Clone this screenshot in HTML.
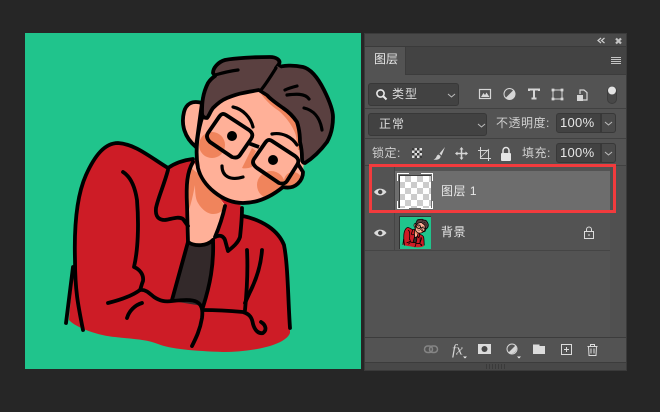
<!DOCTYPE html>
<html><head><meta charset="utf-8">
<style>
html,body{margin:0;padding:0;width:660px;height:412px;overflow:hidden;background:#262626}
body{position:relative;font-family:"Liberation Sans","Noto Sans CJK SC",sans-serif}
.a{position:absolute;box-sizing:border-box}
.t{position:absolute;color:#dadada;font-size:12px;line-height:16px;white-space:nowrap}
.f{position:absolute;box-sizing:border-box;background:#424242;border:1px solid #383838;border-radius:3px}
.s{stroke-width:var(--sw,3.8)}
</style></head><body>
<div class="a" style="left:25px;top:33px;width:336px;height:336px;background:#20c48c"></div>
<div class="a" style="left:364px;top:33px;width:263px;height:338px;background:#535353;border:1px solid #3a3a3a"></div>
<div class="a" style="left:365px;top:47px;width:261px;height:28px;background:#434343"></div>
<div class="a" style="left:365px;top:34px;width:261px;height:13px;background:#494949;border-bottom:1px solid #3a3a3a"></div>
<div class="a" style="left:365px;top:47px;width:41px;height:28px;background:#535353;border-right:1px solid #3c3c3c"></div>
<div class="a" style="left:406px;top:74px;width:220px;height:1px;background:#3c3c3c"></div>
<div class="a" style="left:365px;top:108px;width:261px;height:1px;background:#414141"></div>
<div class="a" style="left:365px;top:138px;width:261px;height:1px;background:#414141"></div>
<div class="a" style="left:365px;top:165px;width:261px;height:1px;background:#414141"></div>
<div class="a" style="left:395px;top:171px;width:215px;height:39px;background:#6d6d6d"></div>
<div class="a" style="left:395px;top:211px;width:215px;height:39px;background:#535353"></div>
<div class="a" style="left:365px;top:250px;width:245px;height:1px;background:#454545"></div>
<div class="a" style="left:394px;top:166px;width:1px;height:85px;background:#454545"></div>
<div class="a" style="left:610px;top:166px;width:16px;height:171px;background:#505050"></div>
<div class="a" style="left:365px;top:337px;width:261px;height:1px;background:#3c3c3c"></div>
<div class="a" style="left:365px;top:362px;width:261px;height:8px;background:#484848;border-top:1px solid #3c3c3c"></div>
<div class="a" style="left:486px;top:364px;width:19px;height:5px;background:repeating-linear-gradient(90deg,#3a3a3a 0 1px,transparent 1px 3px)"></div>

<div class="f" style="left:368px;top:83px;width:91px;height:23px"></div>
<div class="f" style="left:368px;top:113px;width:119px;height:23px"></div>
<div class="f" style="left:556px;top:113px;width:45px;height:20px;border-radius:3px 0 0 3px"></div>
<div class="f" style="left:601px;top:113px;width:15px;height:20px;background:#4a4a4a;border-radius:0 3px 3px 0"></div>
<div class="f" style="left:556px;top:143px;width:45px;height:20px;border-radius:3px 0 0 3px"></div>
<div class="f" style="left:601px;top:143px;width:15px;height:20px;background:#4a4a4a;border-radius:0 3px 3px 0"></div>

<div class="t" style="left:374px;top:51px;font-size:12px;color:#e6e6e6">图层</div>
<div class="t" style="left:392px;top:86px;letter-spacing:1px">类型</div>
<div class="t" style="left:379px;top:116px;letter-spacing:1px">正常</div>
<div class="t" style="left:496px;top:115px;letter-spacing:.5px;color:#cfcfcf">不透明度:</div>
<div class="t" style="left:560px;top:115px;font-size:13px;letter-spacing:.3px;color:#e6e6e6">100%</div>
<div class="t" style="left:372px;top:145px;letter-spacing:.5px;color:#cfcfcf">锁定:</div>
<div class="t" style="left:522px;top:145px;letter-spacing:.5px;color:#cfcfcf">填充:</div>
<div class="t" style="left:560px;top:145px;font-size:13px;letter-spacing:.3px;color:#e6e6e6">100%</div>
<div class="t" style="left:441px;top:183px;letter-spacing:.5px;color:#e8e8e8">图层 1</div>
<div class="t" style="left:441px;top:224px;letter-spacing:.5px;color:#e8e8e8">背景</div>

<div class="a" style="left:399px;top:176px;width:32px;height:32px;background-color:#fff;background-image:conic-gradient(#ccc 25%,#fff 0 50%,#ccc 0 75%,#fff 0);background-size:12px 12px"></div>
<div class="a" style="left:399px;top:217px;width:32px;height:32px;background:#20c48c;overflow:hidden"></div>

<svg class="a" style="left:0;top:0" width="660" height="412" viewBox="0 0 660 412">
<defs><clipPath id="fc"><path d="M203 115C197 132 195 152 198 168C202 185 222 203 243 203C258 203 272 196 283 187C296 190 303 180 303 172L304 160C306 140 304 115 285 98C272 88 260 85 243 88C225 92 210 100 203 115Z"/></clipPath></defs>
<g id="art">
<!-- jacket -->
<path d="M118 143C105 143 92 158 84 182C76 210 74 240 74 270C72 290 70 305 69 320C76 328 100 336 115 337C130 339 145 339 158 344C170 349 195 351 223 352C250 352 285 346 290 333C290 300 288 265 284 245C278 230 262 222 243 216L242 207L193 158C185 160 175 163 168 168C150 157 135 144 118 143Z" fill="#cd1c26"/>
<!-- neck -->
<path d="M193 160C187 172 186 185 187 205L188 242C195 247 207 246 213 240L225 205L198 170Z" fill="#ffb098"/>
<path d="M190 167C187 185 187 200 188 212C191 205 193 195 195 185C195 195 196 200 198 203C202 210 208 214 213 214C218 214 222 212 225 207L215 190L200 175Z" fill="#f0845c"/>
<!-- shirt -->
<path d="M188 242C195 247 207 246 213 240C214 265 210 285 203 306L172 301Z" fill="#33292a"/>
<g class="s" fill="none" stroke="#000" stroke-linecap="round" stroke-linejoin="round">
<path d="M83 330C78 305 75 290 75 260C74 225 77 195 86 175C95 155 105 143 118 143C135 144 150 157 168 168"/>
<path d="M73 267L66 323"/>
<path d="M168 170C164 185 158 198 156 208C155 217 159 220 165 220C172 219 178 216 183 219L188 226"/>
<path d="M168 168C175 163 185 160 193 159"/>
<path d="M193 162C187 172 186 185 187 205L188 242C195 247 207 246 213 240"/>
<path d="M188 242L172 300"/>
<path d="M225 206C222 220 218 230 215 237C219 235 223 235 225 240L228 251C233 247 238 243 240 237C241 228 242 218 242 208"/>
<path d="M213 240C214 265 210 285 203 307"/>
<path d="M243 216C262 220 278 230 284 245C288 265 288 300 290 328"/>
<path d="M123 172C131 177 135 187 137 200C139 225 138 250 134 267C139 269 144 274 143 281C141 286 141 288 140 290C132 296 120 300 108 303"/>
<path d="M140 290C146 289 150 294 154 297C160 301 165 302 172 301C182 300 192 299 197 302C202 305 203 310 202 318C200 330 196 338 192 346"/>
<path d="M142 303C135 305 129 311 127 318"/>
<path d="M203 310C215 310 232 311 243 312C250 314 252 318 253 324C255 331 259 334 263 333C267 330 266 325 261 322"/>
<path d="M247 250C248 270 247 290 245 310"/>
<path d="M262 250C261 265 256 280 250 292L245 303"/>
</g>
<!-- ear -->
<path class="s" d="M202 103C192 100 186 104 184 112C181 124 184 137 196 147Z" fill="#ffb098" stroke="#000" stroke-linejoin="round"/>
<!-- face -->
<path d="M203 115C197 132 195 152 198 168C202 185 222 203 243 203C258 203 272 196 283 187C296 190 303 180 303 172L304 160C306 140 304 115 285 98C272 88 260 85 243 88C225 92 210 100 203 115Z" fill="#ffb098"/>
<g clip-path="url(#fc)">
<circle cx="212" cy="145" r="13" fill="#f0845c"/>
<circle cx="271" cy="185" r="14" fill="#f0845c"/>
<circle cx="293" cy="181" r="9" fill="#f0845c"/>
<path d="M259 90C263 98 270 105 279 111C287 118 294 128 296 136L298 150L306 150L304 115L280 88Z" fill="#f0845c"/>
<path d="M252 148L242 168C245 169 249 168 252 167C252 161 253 156 256 151Z" fill="#f0845c"/>
</g>
<path class="s" d="M203 115C197 132 195 152 198 168C202 185 222 203 243 203C258 203 272 196 283 187C296 190 303 180 303 172L298 164" fill="none" stroke="#000" stroke-linecap="round" stroke-linejoin="round"/>
<!-- hair -->
<path class="s" d="M213 73C213 68 218 62 225 60C235 58 255 57 270 57C276 57 281 60 279 64L276 68C283 65 294 65 303 67C311 69 318 78 324 90C329 100 333 110 333 117C333 126 331 135 327 142C321 150 313 158 305 163C302 163 302 160 302 158C302 150 301 146 300 142C300 135 299 128 297 122C293 116 289 112 283 108C276 103 270 99 267 95L259 90C253 91 248 92 243 93C237 94 232 96 227 98C222 100 217 104 213 108C210 112 209 116 207 118C204 118 202 116 202 113C202 108 202 103 203 98C204 92 206 87 208 83C210 80 212 78 215 76Z" fill="#5a4040" stroke="#000" stroke-linejoin="round"/>
<path d="M259 88C264 82 270 74 277 66L284 70L270 95Z" fill="#5a4040"/>
<g class="s" fill="none" stroke="#000" stroke-linecap="round" stroke-linejoin="round" style="--sw:3.2">
<path d="M215 75C222 73 230 71 238 70"/>
<path d="M285 90C289 88 293 87 297 86"/>
<path d="M287 95C295 94 305 93 309 99"/>
<path d="M304 108C313 110 320 117 322 130"/>
<path d="M233 107C243 109 251 118 253 127"/>
<path d="M272 134C282 132 292 137 297 145"/>
<path d="M222 166C222 176 230 181 243 177"/>
<path d="M261 90C266 84 271 76 276 68"/>
</g>
<!-- glasses -->
<g class="s" fill="none" stroke="#000" stroke-linejoin="round">
<path d="M226 115L249 130C253 133 253 136 251 139L240 155C238 158 235 158 232 157L210 142C207 139 206 136 208 133L219 117C221 114 223 113 226 115Z"/>
<path d="M272 141L295 156C299 159 299 162 297 165L287 181C285 184 282 184 279 183L257 168C253 165 252 162 254 159L265 143C267 140 269 139 272 141Z"/>
<path d="M248 143L259 147"/>
</g>
<circle cx="232" cy="136" r="5" fill="#000"/>
<circle cx="273" cy="160" r="5" fill="#000"/>
</g>

<!-- thumbnail 2 -->
<use href="#art" transform="translate(399 217) scale(.0952) translate(-25 -33)" style="--sw:8"/>
<path d="M399.500 249V216.500H431" fill="none" stroke="#333" stroke-width="1"/>

<!-- thumb brackets -->
<path d="M397.500 181V173.500H409M421 173.500H432.500V181M432.500 201V208.500H421M409 208.500H397.500V201" fill="none" stroke="#fff" stroke-width="1"/>
<path d="M399.500 208V175.500H431" fill="none" stroke="#3a3a3a" stroke-width="1"/>

<!-- red box -->
<rect x="370.500" y="165.500" width="244" height="46" fill="none" stroke="#f23b3d" stroke-width="3"/>

<!-- top icons -->
<path d="M601 38L598 40.500L601 43M604.500 38L601.500 40.500L604.500 43" fill="none" stroke="#cfcfcf" stroke-width="1.200"/>
<path d="M616 38.500L621 43.500M621 38.500L616 43.500" stroke="#c4c4c4" stroke-width="2.200"/>
<path d="M611 57.500H621M611 59.500H621M611 61.500H621M611 63.500H621" stroke="#c4c4c4" stroke-width="1"/>

<!-- search -->
<circle cx="380.500" cy="93.500" r="3.600" fill="none" stroke="#e8e8e8" stroke-width="1.600"/>
<path d="M383 96L386.500 99.500" stroke="#e8e8e8" stroke-width="2"/>
<path d="M448 94L451.500 97L455 94M478 124L481.500 127L485 124M605 122L608.500 125L612 122M605 152L608.500 155L612 152" fill="none" stroke="#bdbdbd" stroke-width="1"/>

<!-- filter icons -->
<rect x="479.500" y="89.500" width="11" height="9" fill="none" stroke="#d6d6d6" stroke-width="1.200"/>
<path d="M481 97L483.500 93L485 95L486.500 92.500L489.500 97Z" fill="#d6d6d6"/>
<circle cx="509.500" cy="94" r="5.500" fill="#555" stroke="#d6d6d6" stroke-width="1"/>
<path d="M513.500 90L505.500 98A5.500 5.500 0 0 0 513.500 90Z" fill="#d6d6d6"/>
<path d="M529 91V89.500H539V91M534 90V98.500M531.500 98.500H536.500" fill="none" stroke="#d6d6d6" stroke-width="2"/>
<rect x="553" y="90" width="9" height="9" fill="none" stroke="#d6d6d6" stroke-width="1"/>
<path d="M552 89h2v2h-2zM561 89h2v2h-2zM552 98h2v2h-2zM561 98h2v2h-2z" fill="#d6d6d6" stroke="#d6d6d6" stroke-width=".8"/>
<path d="M580 94V90H584L587 92.500V100H583" fill="none" stroke="#d6d6d6" stroke-width="1.200"/>
<rect x="577" y="95" width="6" height="6" fill="#d6d6d6"/>
<rect x="607.500" y="86.500" width="9" height="17" rx="4.500" fill="#484848" stroke="#3c3c3c"/>
<circle cx="612" cy="90.500" r="4" fill="#e4e4e4"/>

<!-- lock icons -->
<rect x="412" y="148" width="10" height="10" fill="#ddd"/>
<path d="M412 148h2.500v2.500H412zM417 148h2.500v2.500H417zM414.500 150.500h2.500V153h-2.500zM419.500 150.500H422V153h-2.500zM412 153h2.500v2.500H412zM417 153h2.500v2.500H417zM414.500 155.500h2.500V158h-2.500zM419.500 155.500H422V158h-2.500z" fill="#3a3a3a"/>
<path d="M445 147L439.500 153.500L441.500 155.500Z" fill="#d6d6d6"/>
<path d="M438.500 154.500C436 155 437 158.500 433.500 159.500C437 160.500 441 159 440.500 156Z" fill="#d6d6d6"/>
<path d="M461.500 148V159M456 153.500H467" stroke="#d6d6d6" stroke-width="1.500"/>
<path d="M459.500 149.500L461.500 147L463.500 149.500ZM459.500 157.500L461.500 160L463.500 157.500ZM457.500 151.500L455 153.500L457.500 155.500ZM465.500 151.500L468 153.500L465.500 155.500Z" fill="#d6d6d6"/>
<path d="M480.500 147V158.500H491M478 150.500H488.500V161" fill="none" stroke="#d6d6d6" stroke-width="1"/>
<path d="M480 158L489 149" stroke="#d6d6d6" stroke-width=".8"/>
<rect x="501" y="153" width="10" height="8" rx="1" fill="#e6e6e6"/>
<path d="M503 153V150.500A3 3 0 0 1 509 150.500V153" fill="none" stroke="#e6e6e6" stroke-width="1.500"/>

<!-- eyes -->
<g fill="#dcdcdc">
<path d="M374 192C377 187.500 383 187.500 386.500 192C383 196.500 377 196.500 374 192Z"/>
<path d="M374 233C377 228.500 383 228.500 386.500 233C383 237.500 377 237.500 374 233Z"/>
</g>
<circle cx="380.200" cy="192" r="2.200" fill="#444"/>
<circle cx="380.200" cy="233" r="2.200" fill="#444"/>

<!-- layer lock -->
<rect x="584.500" y="231.500" width="9" height="7" fill="none" stroke="#dcdcdc" stroke-width="1"/>
<path d="M586.500 231.500V229.500A2.500 2.500 0 0 1 591.500 229.500V231.500" fill="none" stroke="#dcdcdc" stroke-width="1"/>
<rect x="588.500" y="234" width="1" height="2" fill="#dcdcdc"/>

<!-- bottom icons -->
<g fill="none" stroke="#858585" stroke-width="1.500">
<rect x="424.500" y="346" width="8" height="6.500" rx="3.200"/>
<rect x="429.500" y="346" width="8" height="6.500" rx="3.200"/>
</g>
<text x="452" y="354.500" font-family="Liberation Serif,serif" font-style="italic" font-size="15" fill="#d6d6d6">fx</text>
<path d="M463 356.500H467L465 358.500Z" fill="#eee"/>
<rect x="478" y="344" width="13" height="10" fill="#dcdcdc"/>
<circle cx="484.500" cy="349" r="3" fill="#484848"/>
<circle cx="512" cy="349" r="5" fill="#555" stroke="#d6d6d6" stroke-width="1"/>
<path d="M515.500 345.500L508.500 352.500A5 5 0 0 0 515.500 345.500Z" fill="#d6d6d6"/>
<path d="M517 356.500H521L519 358.500Z" fill="#eee"/>
<path d="M533 344.500H539.500V346H545V354H533Z" fill="#dcdcdc"/>
<rect x="561.500" y="344.500" width="10" height="10" fill="none" stroke="#dcdcdc" stroke-width="1"/>
<path d="M566.500 347V352M564 349.500H569" stroke="#dcdcdc" stroke-width="1"/>
<path d="M587.500 346.500H597.500M590.500 346.500V344.500H594.500V346.500M588.500 346.500L589 355.500H596L596.500 346.500M591 348.500V353.500M594 348.500V353.500" fill="none" stroke="#dcdcdc" stroke-width="1"/>
</svg>
</body></html>
